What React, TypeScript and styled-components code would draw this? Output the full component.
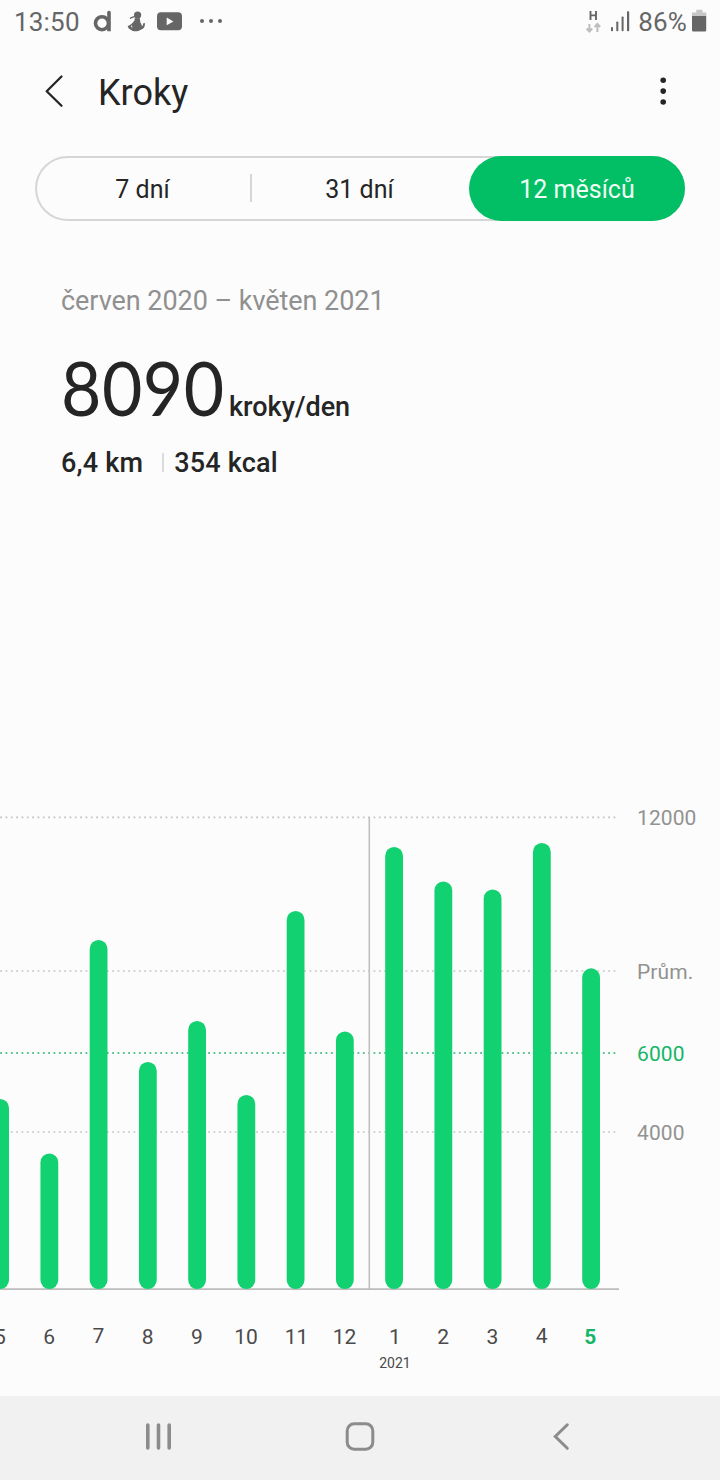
import React from "react";
import styled, { createGlobalStyle } from "styled-components";

const GlobalStyle = createGlobalStyle`
  *, *::before, *::after { box-sizing: border-box; }
  body { margin: 0; background: #fcfcfc; }
`;

const Screen = styled.div`
  width: 720px;
  height: 1480px;
  display: flex;
  flex-direction: column;
  overflow: hidden;
  background: #fcfcfc;
  color: #252525;
  font-family: Roboto, "Liberation Sans", sans-serif;
`;

const StatusBar = styled.header`
  height: 44px;
  flex: none;
  display: flex;
  align-items: center;
  justify-content: space-between;
  padding: 0 12px 0 14px;
  color: #666;
`;

const StatusGroup = styled.div`
  display: flex;
  align-items: center;
`;

const StatusText = styled.span<{ $gap?: number }>`
  margin-right: ${(p) => p.$gap ?? 0}px;
  font-size: 26px;
  letter-spacing: 0.2px;
  line-height: 44px;
`;

const StatusIcons = styled.svg`
  display: block;
`;

const AppBar = styled.div`
  height: 96px;
  flex: none;
  display: flex;
  align-items: center;
  padding: 0 39px 0 36px;
`;

const IconButton = styled.button`
  width: 36px;
  height: 44px;
  padding: 0;
  border: 0;
  background: none;
  color: inherit;
  display: flex;
  align-items: center;
  justify-content: center;
`;

const Title = styled.h1`
  flex: 1;
  margin: 2px 0 0 26px;
  font-size: 36px;
  font-weight: 400;
  line-height: 44px;
`;

const Tabs = styled.div`
  height: 65px;
  flex: none;
  margin: 16px 35px 0;
  display: flex;
  border-radius: 33px;
  box-shadow: inset 0 0 0 2px #d6d6d6;
`;

const Tab = styled.button<{ $active?: boolean; $divider?: boolean }>`
  flex: ${(p) => (p.$active ? "0 0 216px" : "1")};
  padding: ${(p) => (p.$active ? "2px 0 0" : "2px 2px 0 0")};
  border: 0;
  border-radius: ${(p) => (p.$active ? "33px" : "0")};
  background: ${(p) =>
    p.$active
      ? "#02be64"
      : p.$divider
        ? "linear-gradient(#d6d6d6, #d6d6d6) right 18px / 2px 28px no-repeat"
        : "none"};
  color: ${(p) => (p.$active ? "#effff6" : "#252525")};
  font: 400 25px Roboto, "Liberation Sans", sans-serif;
`;

const Summary = styled.section`
  flex: none;
  height: 579px;
  padding: 62px 61px 0;
`;

const Period = styled.div`
  font-size: 27px;
  line-height: 36px;
  letter-spacing: -0.05px;
  color: #909090;
`;

const Average = styled.div`
  display: flex;
  align-items: baseline;
  margin-top: 24px;
  height: 88px;
`;

const AverageValue = styled.span`
  font-family: Lato, Roboto, sans-serif;
  font-size: 75px;
  line-height: 88px;
  letter-spacing: 0.5px;
  transform: scaleX(0.93);
  transform-origin: left;
`;

const AverageUnit = styled.span`
  margin-left: -8px;
  font-size: 27px;
  font-weight: 500;
`;

const Details = styled.div`
  display: flex;
  align-items: center;
  margin-top: 14px;
  font-size: 27px;
  font-weight: 500;
  line-height: 36px;
  letter-spacing: 0.2px;
`;

const DetailDivider = styled.span`
  width: 2px;
  height: 19px;
  margin: -2px 10px 0 19px;
  background: #dcdcdc;
`;

const Chart = styled.svg`
  display: block;
  flex: none;
  font-family: Roboto, "Liberation Sans", sans-serif;
`;

const NavBar = styled.nav`
  height: 84px;
  flex: none;
  background: #f1f1f1;
  display: flex;
  justify-content: space-between;
  align-items: center;
  padding: 0 141px 4px 140px;
  color: #8c8c8c;
`;

const TOP = 800;

const bars = [
  { label: "5", top: 1099 },
  { label: "6", top: 1153.5 },
  { label: "7", top: 940, lift: 1 },
  { label: "8", top: 1062 },
  { label: "9", top: 1021 },
  { label: "10", top: 1095 },
  { label: "11", top: 911, shift: 1.3 },
  { label: "12", top: 1031.5 },
  { label: "1", top: 847, year: "2021", shift: 1 },
  { label: "2", top: 881.5 },
  { label: "3", top: 889.5 },
  { label: "4", top: 843, lift: 1 },
  { label: "5", top: 968.3, current: true, shift: -0.6 },
];

const guides = [
  { label: "12000", y: 817.3 },
  { label: "Prům.", y: 971 },
  { label: "6000", y: 1053, goal: true },
  { label: "4000", y: 1132 },
];

function StepsChart() {
  return (
    <Chart width="720" height="596" viewBox={`0 ${TOP} 720 596`}>
      {guides.map((g) => (
        <g key={g.label}>
          <line
            x1="615.3"
            x2="0"
            y1={g.y}
            y2={g.y}
            stroke={g.goal ? "#21b26b" : "#c4c4c4"}
            strokeWidth="1.7"
            strokeDasharray="1.8 3.533"
          />
          <text x="637" y={g.y + 8} fontSize="21" letterSpacing="0.1" fill={g.goal ? "#16b568" : "#929292"}>
            {g.label}
          </text>
        </g>
      ))}
      <line x1="369.3" x2="369.3" y1="817" y2="1289" stroke="#c0c0c0" strokeWidth="1.6" />
      <line x1="0" x2="619" y1="1289.1" y2="1289.1" stroke="#bdbdbd" strokeWidth="1.8" />
      {bars.map((b, i) => {
        const x = i * 49.25 + 0.1;
        return (
          <g key={i}>
            <rect x={x - 8.9} y={b.top} width="17.8" height={1289 - b.top} rx="8.9" fill="#12d170" />
            <text
              x={x - 0.3 + (b.shift ?? 0)}
              y={1344 - (b.lift ?? 0)}
              textAnchor="middle"
              fontSize="21"
              fontWeight={b.current ? 700 : 400}
              fill={b.current ? "#16b568" : "#4a4a4a"}
            >
              {b.label}
            </text>
            {b.year && (
              <text x={x + 0.8} y="1368" textAnchor="middle" fontSize="14" fill="#4a4a4a">
                {b.year}
              </text>
            )}
          </g>
        );
      })}
    </Chart>
  );
}

export default function App() {
  return (
    <>
      <GlobalStyle />
      <Screen>
        <StatusBar>
          <StatusGroup>
            <StatusText>13:50</StatusText>
            <StatusIcons width="150" height="44" viewBox="80 0 150 44" fill="#666">
              <circle cx="102" cy="23.2" r="6.5" fill="none" stroke="#666" strokeWidth="3.6" />
              <path d="M107.2 12.5q0-1.8 1.8-1.8t1.8 1.8v18.8h-3.6z" />
              <circle cx="137.6" cy="15" r="3.6" />
              <path d="M129.6 17.8l4.8-2 .6 1.2-4.8 2z" />
              <path
                fillRule="evenodd"
                d="M134.6 18.3h5.2l.6 4.4c1.1 1 1.4 2.3 1.4 3.6 1-.5 1.4-1.4 1.2-2.7l1.9-.6c.4 3.8-1.5 6.3-4.6 6.9-1.8 1.7-7.5 1.8-9.2 0-1.8-.5-3.2-2-3.4-3.9 2.7-.8 4.6-2.3 6.9-5.7zM131.8 24.9c-1 .9-.9 2 .7 2.9z"
              />
              <rect x="157" y="12.3" width="25" height="18" rx="4" />
              <path d="M166.7 17.6v7.6l6.7-3.8z" fill="#fcfcfc" />
              <circle cx="202" cy="21" r="2" />
              <circle cx="211" cy="21" r="2" />
              <circle cx="220" cy="21" r="2" />
            </StatusIcons>
          </StatusGroup>
          <StatusGroup>
            <StatusIcons width="54" height="44" viewBox="584 0 54 44" fill="#666">
              <path d="M590.5 11v9M596 11v9M590.5 15.4h5.5" stroke="#666" strokeWidth="1.9" fill="none" />
              <path d="M589.4 24v7M586.6 28.5l2.8 3 2.8-3M597.4 32v-7M594.6 27l2.8-3 2.8 3" stroke="#bdbdbd" strokeWidth="2" fill="none" />
              <rect x="611" y="27" width="2" height="4.2" rx=".8" />
              <rect x="616.3" y="21.5" width="2" height="9.7" rx=".8" />
              <rect x="621.6" y="16.5" width="2" height="14.7" rx=".8" />
              <rect x="627" y="11.2" width="2.2" height="20" rx=".8" />
            </StatusIcons>
            <StatusText $gap={3}>86%</StatusText>
            <StatusIcons width="18" height="44" viewBox="690 0 18 44">
              <path d="M696.3 9.7h6.2v2.8h3.8v4h-14.4v-4h4.4z" fill="#c6c6c6" />
              <path d="M692 16h14.2v14.2q0 1.3-1.3 1.3h-11.6q-1.3 0-1.3-1.3z" fill="#666" />
            </StatusIcons>
          </StatusGroup>
        </StatusBar>

        <AppBar>
          <IconButton aria-label="Zpět">
            <svg width="36" height="44" viewBox="36 70 36 44" fill="none" stroke="#252525" strokeWidth="2.3" strokeLinecap="round" strokeLinejoin="round">
              <path d="M61.5 76.5 46.7 91.2 61.5 105.8" />
            </svg>
          </IconButton>
          <Title>Kroky</Title>
          <IconButton aria-label="Další možnosti">
            <svg width="36" height="44" viewBox="645 70 36 44" fill="#252525">
              <circle cx="663.2" cy="80.2" r="2.8" />
              <circle cx="663.2" cy="91.1" r="2.8" />
              <circle cx="663.2" cy="102" r="2.8" />
            </svg>
          </IconButton>
        </AppBar>

        <Tabs>
          <Tab $divider>7 dní</Tab>
          <Tab>31 dní</Tab>
          <Tab $active>12 měsíců</Tab>
        </Tabs>

        <Summary>
          <Period>červen 2020 – květen 2021</Period>
          <Average>
            <AverageValue>8090</AverageValue>
            <AverageUnit>kroky/den</AverageUnit>
          </Average>
          <Details>
            <span>6,4 km</span>
            <DetailDivider />
            <span>354 kcal</span>
          </Details>
        </Summary>

        <StepsChart />

        <NavBar>
          <svg width="36" height="36" viewBox="140 1418 36 36" stroke="currentColor" strokeWidth="3.6" strokeLinecap="round">
            <path d="M147.8 1425v23M158.5 1425v23M169.2 1425v23" />
          </svg>
          <svg width="36" height="36" viewBox="341.5 1418 36 36" fill="none" stroke="currentColor" strokeWidth="3">
            <rect x="346.7" y="1423.8" width="25.6" height="25.4" rx="7" />
          </svg>
          <svg width="36" height="36" viewBox="543 1418 36 36" fill="none" stroke="currentColor" strokeWidth="3" strokeLinecap="round">
            <path d="M567.3 1424.8 555.3 1436.5 567.3 1448.3" />
          </svg>
        </NavBar>
      </Screen>
    </>
  );
}
